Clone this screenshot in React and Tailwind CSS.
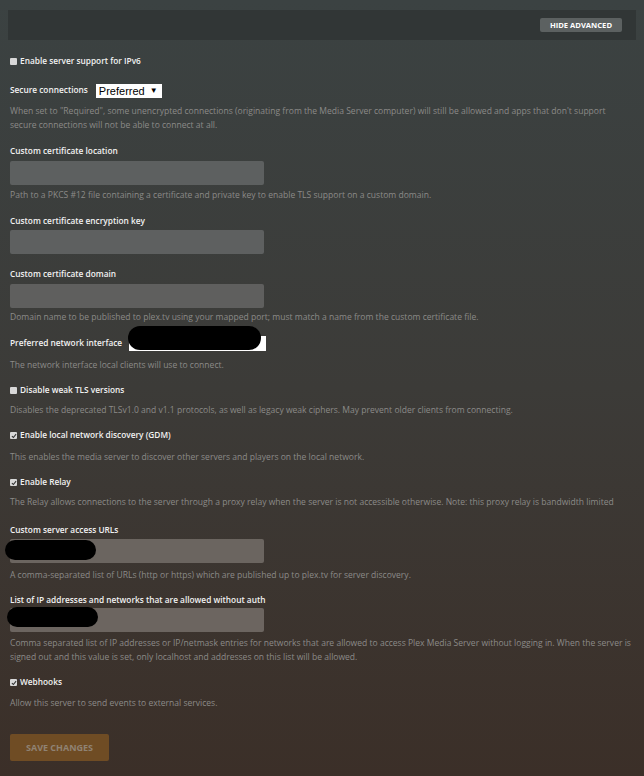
import React from "react";

const Check = ({ checked }) => (
  <span className="inline-flex items-center justify-center w-[7px] h-[7px] bg-[#d8d8d8] rounded-[1px] mr-[3px] shrink-0">
    {checked && (
      <svg viewBox="0 0 8 8" className="w-[6px] h-[6px]">
        <path d="M1.2 4.2 L3.2 6 L6.8 1.6" stroke="#333" strokeWidth="1.4" fill="none" />
      </svg>
    )}
  </span>
);

const Label = ({ children, className = "" }) => (
  <div className={`h-[15px] leading-[15px] text-[8.3px] font-semibold text-[#f2f2f2] ${className}`}>{children}</div>
);

const Desc = ({ children, className = "" }) => (
  <div className={`leading-[14px] text-[8.55px] text-[#8b8a88] ${className}`}>{children}</div>
);

const CheckRow = ({ checked, children, className = "" }) => (
  <div className={`h-[15px] flex items-center text-[8.3px] font-semibold text-[#f2f2f2] ${className}`}>
    <Check checked={checked} />
    {children}
  </div>
);

const Field = ({ className = "", bg = "bg-[#5d6060]" }) => (
  <div className={`w-[254px] h-[24px] rounded-[2px] ${bg} ${className}`}></div>
);

const Blob = ({ className }) => <div className={`absolute bg-black rounded-full ${className}`}></div>;

export default function App() {
  return (
    <div
      className="h-[776px] overflow-hidden bg-linear-to-b from-[#3b4242] via-[#3c3b38] to-[#3b2f28] px-[8px] pt-[10px]"
      style={{ fontFamily: '"Open Sans", "Liberation Sans", sans-serif' }}
    >
      <div className="h-[30px] bg-[#313636] flex items-center justify-end pr-[14px]">
        <button className="h-[14px] px-[10px] bg-[#5c6161] rounded-[2px] text-[7.6px] font-bold text-white uppercase leading-[14px]">
          Hide Advanced
        </button>
      </div>

      <div className="px-[2px]">
        <CheckRow className="mt-[14px]">Enable server support for IPv6</CheckRow>

        <div className="mt-[14px] h-[15px] flex items-center">
          <span className="text-[8.3px] font-semibold text-[#f2f2f2]">Secure connections</span>
          <div className="ml-[8px] h-[14px] w-[66px] bg-white flex items-center px-[3px] text-[11px] text-black leading-[14px]" style={{ fontFamily: '"Liberation Sans", sans-serif' }}>
            Preferred <span className="ml-[5px] text-[8px]">▼</span>
          </div>
        </div>
        <Desc className="mt-[6px] w-[610px]">
          When set to "Required", some unencrypted connections (originating from the Media Server computer) will still be allowed and apps that don't support secure connections will not be able to connect at all.
        </Desc>

        <Label className="mt-[11px]">Custom certificate location</Label>
        <Field className="mt-[3px]" />
        <Desc className="mt-[3px]">Path to a PKCS #12 file containing a certificate and private key to enable TLS support on a custom domain.</Desc>

        <Label className="mt-[11px]">Custom certificate encryption key</Label>
        <Field className="mt-[2px]" bg="bg-[#5e6060]" />

        <Label className="mt-[12px]">Custom certificate domain</Label>
        <Field className="mt-[3px]" bg="bg-[#5f5f5e]" />
        <Desc className="mt-[2px]">Domain name to be published to plex.tv using your mapped port; must match a name from the custom certificate file.</Desc>

        <div className="mt-[12px] h-[15px] flex items-center relative">
          <span className="text-[8.3px] font-semibold text-[#f2f2f2]">Preferred network interface</span>
          <div className="ml-[7px] h-[15px] w-[137px] bg-white"></div>
          <Blob className="left-[118px] top-[-10px] w-[133px] h-[24px]" />
        </div>
        <Desc className="mt-[7px]">The network interface local clients will use to connect.</Desc>

        <CheckRow className="mt-[11px]">Disable weak TLS versions</CheckRow>
        <Desc className="mt-[5px]">Disables the deprecated TLSv1.0 and v1.1 protocols, as well as legacy weak ciphers. May prevent older clients from connecting.</Desc>

        <CheckRow checked className="mt-[11px]">Enable local network discovery (GDM)</CheckRow>
        <Desc className="mt-[7px]">This enables the media server to discover other servers and players on the local network.</Desc>

        <CheckRow checked className="mt-[11px]">Enable Relay</CheckRow>
        <Desc className="mt-[5px] whitespace-nowrap">The Relay allows connections to the server through a proxy relay when the server is not accessible otherwise. Note: this proxy relay is bandwidth limited</Desc>

        <Label className="mt-[13px]">Custom server access URLs</Label>
        <div className="relative mt-[2px]">
          <Field bg="bg-[#6b6560]" />
          <Blob className="left-[-5px] top-[1px] w-[91px] h-[20px]" />
        </div>
        <Desc className="mt-[5px]">A comma-separated list of URLs (http or https) which are published up to plex.tv for server discovery.</Desc>

        <Label className="mt-[10px]">List of IP addresses and networks that are allowed without auth</Label>
        <div className="relative mt-[1px]">
          <Field bg="bg-[#6c6560]" />
          <Blob className="left-[-3px] top-[-1px] w-[91px] h-[20px]" />
        </div>
        <Desc className="mt-[4px]">
          Comma separated list of IP addresses or IP/netmask entries for networks that are allowed to access Plex Media Server without logging in. When the server is signed out and this value is set, only localhost and addresses on this list will be allowed.
        </Desc>

        <CheckRow checked className="mt-[11px]">Webhooks</CheckRow>
        <Desc className="mt-[6px]">Allow this server to send events to external services.</Desc>

        <button className="mt-[24px] w-[99px] h-[27px] bg-[#6f4c24] rounded-[2px] text-[9px] font-bold text-[#8f8273] uppercase">
          Save Changes
        </button>
      </div>
    </div>
  );
}
